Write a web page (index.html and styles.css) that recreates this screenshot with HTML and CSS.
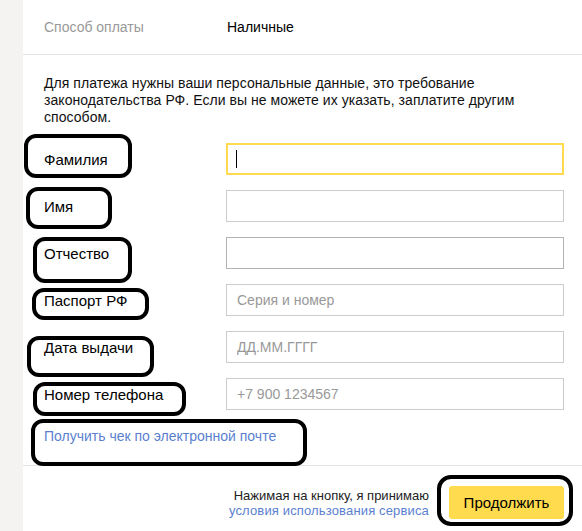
FILE: index.html
```html
<!DOCTYPE html>
<html lang="ru">
<head>
<meta charset="utf-8">
<title>Оплата</title>
<link rel="stylesheet" href="styles.css">
</head>
<body>
<div class="page">
  <aside class="strip"></aside>
  <main class="main">
    <div class="pay-row">
      <span class="pay-label">Способ оплаты</span>
      <span class="pay-value">Наличные</span>
    </div>
    <p class="note">Для платежа нужны ваши персональные данные, это требование законодательства РФ. Если вы не можете их указать, заплатите другим способом.</p>
    <form class="form">
      <label class="label">Фамилия</label>
      <div class="field field-focus"><input class="input" type="text"><span class="caret"></span></div>
      <label class="label">Имя</label>
      <div class="field"><input class="input" type="text"></div>
      <label class="label">Отчество</label>
      <div class="field field-hover"><input class="input" type="text"></div>
      <label class="label">Паспорт РФ</label>
      <div class="field"><input class="input" type="text" placeholder="Серия и номер"></div>
      <label class="label">Дата выдачи</label>
      <div class="field"><input class="input" type="text" placeholder="ДД.ММ.ГГГГ"></div>
      <label class="label">Номер телефона</label>
      <div class="field"><input class="input" type="text" placeholder="+7 900 1234567"></div>
    </form>
    <div class="receipt"><a class="link receipt-link" href="#">Получить чек по электронной почте</a></div>
    <div class="footer">
      <div class="terms">
        <div>Нажимая на кнопку, я принимаю</div>
        <a class="link terms-link" href="#">условия использования сервиса</a>
      </div>
      <button class="btn" type="button">Продолжить</button>
    </div>
  </main>
  <span class="mark mark-1"></span>
  <span class="mark mark-2"></span>
  <span class="mark mark-3"></span>
  <span class="mark mark-4"></span>
  <span class="mark mark-5"></span>
  <span class="mark mark-6"></span>
  <span class="mark mark-7"></span>
  <span class="mark mark-8"></span>
</div>
</body>
</html>
```
FILE: styles.css
```css
html, body {
  margin: 0;
  padding: 0;
  background: #fff;
}
body {
  font-family: "Liberation Sans", Arial, sans-serif;
  color: #000;
}
.page {
  position: relative;
  display: flex;
  width: 582px;
  height: 531px;
  overflow: hidden;
}
.strip {
  width: 23px;
  flex: none;
  background: #f4f3f1;
}
.main {
  flex: 1;
  display: flex;
  flex-direction: column;
}
.pay-row {
  height: 54px;
  display: flex;
  align-items: center;
  padding-left: 21px;
  border-bottom: 1px solid #e5e5e5;
  font-size: 14px;
}
.pay-label {
  width: 183px;
  color: #999;
}
.pay-value {
  color: #000;
}
.note {
  margin: 0;
  padding: 20px 0 0 21px;
  width: 520px;
  font-size: 14px;
  line-height: 17px;
  letter-spacing: 0.05px;
  color: #111;
}
.form {
  margin: 17px 0 0;
  padding-left: 21px;
  display: grid;
  grid-template-columns: 182px 338px;
  grid-auto-rows: 32px;
  row-gap: 15px;
  align-items: center;
}
.label {
  font-size: 15px;
  color: #000;
}
.field {
  position: relative;
  height: 32px;
}
.input {
  box-sizing: border-box;
  width: 100%;
  height: 32px;
  margin: 0;
  border: 1px solid #cccccc;
  padding: 0 10px;
  font-family: "Liberation Sans", Arial, sans-serif;
  font-size: 14px;
  color: #000;
  background: #fff;
  outline: none;
}
.input::placeholder {
  color: #999;
}
.field-focus .input {
  border: 2px solid #ffdb4d;
}
.field-hover .input {
  border-color: #b3b3b3;
}
.caret {
  position: absolute;
  left: 10px;
  top: 7px;
  width: 1px;
  height: 18px;
  background: #000;
}
.link {
  color: #5b7fcf;
  text-decoration: none;
}
.receipt {
  padding: 17px 0 20px 21px;
  line-height: 17px;
  border-bottom: 1px solid #e5e5e5;
}
.receipt-link {
  font-size: 14px;
}
.footer {
  display: flex;
  justify-content: flex-end;
  align-items: center;
  gap: 20px;
  padding: 20px 18px 0 0;
}
.terms {
  text-align: right;
  font-size: 13px;
  line-height: 15px;
  color: #222;
}
.terms-link {
  display: block;
  letter-spacing: 0.15px;
}
.btn {
  width: 115px;
  height: 33px;
  border: none;
  border-radius: 3px;
  background: #ffdb4d;
  font-family: "Liberation Sans", Arial, sans-serif;
  font-size: 15px;
  color: #000;
  padding: 0;
}
.mark {
  position: absolute;
  box-sizing: border-box;
  border: 4px solid #000;
  border-radius: 12px;
  pointer-events: none;
}
.mark-1 { left: 24px; top: 134px; width: 108px; height: 44px; }
.mark-2 { left: 26px; top: 187px; width: 86px; height: 42px; }
.mark-3 { left: 33px; top: 237px; width: 99px; height: 46px; }
.mark-4 { left: 32px; top: 288px; width: 117px; height: 32px; }
.mark-5 { left: 27px; top: 336px; width: 127px; height: 41px; }
.mark-6 { left: 33px; top: 382px; width: 153px; height: 34px; }
.mark-7 { left: 31px; top: 419px; width: 276px; height: 47px; }
.mark-8 { left: 437px; top: 475px; width: 136px; height: 51px; border-radius: 14px; }
```
